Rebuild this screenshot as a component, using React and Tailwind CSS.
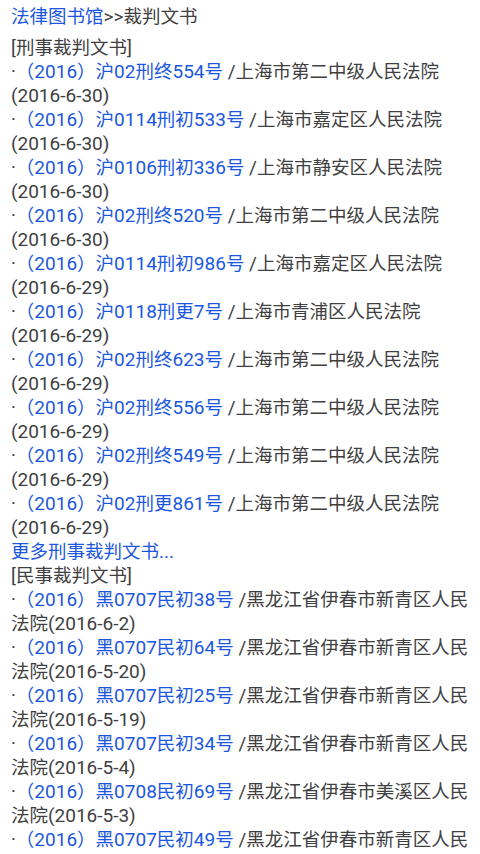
import React from "react";

const criminal = [
  ["（2016）沪02刑终554号", "上海市第二中级人民法院", "2016-6-30"],
  ["（2016）沪0114刑初533号", "上海市嘉定区人民法院", "2016-6-30"],
  ["（2016）沪0106刑初336号", "上海市静安区人民法院", "2016-6-30"],
  ["（2016）沪02刑终520号", "上海市第二中级人民法院", "2016-6-30"],
  ["（2016）沪0114刑初986号", "上海市嘉定区人民法院", "2016-6-29"],
  ["（2016）沪0118刑更7号", "上海市青浦区人民法院", "2016-6-29"],
  ["（2016）沪02刑终623号", "上海市第二中级人民法院", "2016-6-29"],
  ["（2016）沪02刑终556号", "上海市第二中级人民法院", "2016-6-29"],
  ["（2016）沪02刑终549号", "上海市第二中级人民法院", "2016-6-29"],
  ["（2016）沪02刑更861号", "上海市第二中级人民法院", "2016-6-29"],
];

const civil = [
  ["（2016）黑0707民初38号", "黑龙江省伊春市新青区人民法院", "2016-6-2"],
  ["（2016）黑0707民初64号", "黑龙江省伊春市新青区人民法院", "2016-5-20"],
  ["（2016）黑0707民初25号", "黑龙江省伊春市新青区人民法院", "2016-5-19"],
  ["（2016）黑0707民初34号", "黑龙江省伊春市新青区人民法院", "2016-5-4"],
  ["（2016）黑0708民初69号", "黑龙江省伊春市美溪区人民法院", "2016-5-3"],
  ["（2016）黑0707民初49号", "黑龙江省伊春市新青区人民法院", "2016-5-3"],
];

// latin runs are a touch wider than the CJK text in the original
function Mixed({ text }) {
  return text.split(/([\x20-\x7E]+)/).map((part, i) =>
    /^[\x20-\x7E]+$/.test(part) ? (
      <span key={i} className="text-[19px]">{part}</span>
    ) : (
      part
    )
  );
}

function Item({ title, court, date }) {
  return (
    <div>
      ·
      <a href="#" className="text-[#1c57e0]">
        <Mixed text={title} />
      </a>
      <span className="text-[19px]"> /</span>
      {court}
      <span className="whitespace-nowrap text-[19px]">({date})</span>
    </div>
  );
}

export default function App() {
  return (
    <div
      className="min-h-screen bg-white px-[11px] pt-[5px] text-[18.5px] leading-6 text-[#404040] [text-spacing-trim:space-all]"
      style={{ fontFamily: "Roboto, 'Noto Sans CJK SC', sans-serif" }}
    >
      <div className="mb-[7px]">
        <a href="#" className="text-[#1c57e0]">法律图书馆</a>
        <span className="text-[19px]">&gt;&gt;</span>裁判文书
      </div>

      <div>[刑事裁判文书]</div>
      {criminal.map(([t, c, d]) => (
        <Item key={t} title={t} court={c} date={d} />
      ))}
      <div>
        <a href="#" className="text-[#1c57e0]">
          更多刑事裁判文书<span className="text-[19px]">...</span>
        </a>
      </div>

      <div>[民事裁判文书]</div>
      {civil.map(([t, c, d]) => (
        <Item key={t} title={t} court={c} date={d} />
      ))}
    </div>
  );
}
